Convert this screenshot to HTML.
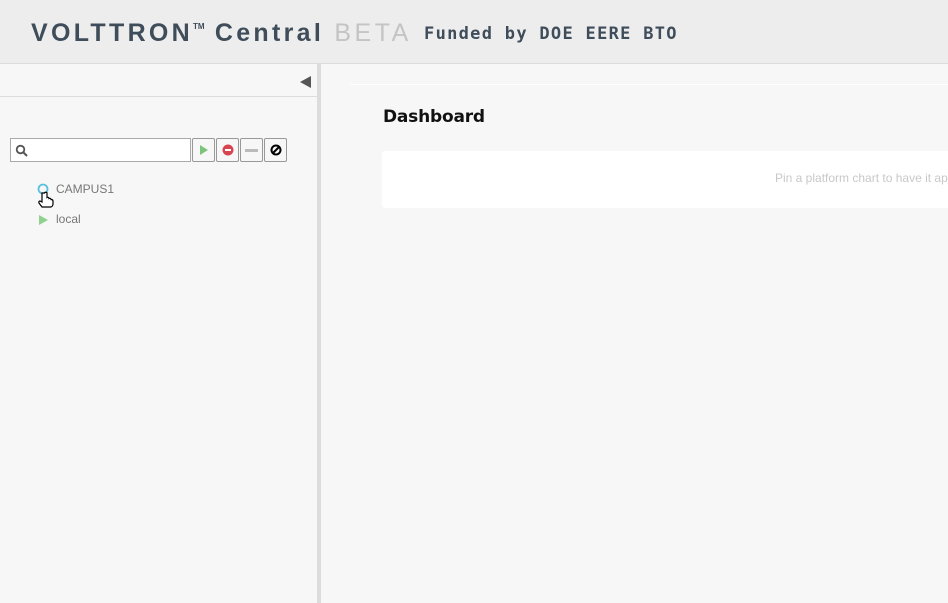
<!DOCTYPE html>
<html><head><style>
*{margin:0;padding:0;box-sizing:border-box}
body{width:948px;height:603px;overflow:hidden;background:#f7f7f7;font-family:"Liberation Sans",sans-serif;position:relative}
.hdr{position:absolute;left:0;top:0;width:948px;height:64px;background:#ededed;border-bottom:1px solid #dcdcdc}
.logo{position:absolute;left:31px;top:19px;font-size:25px;font-weight:bold;color:#3f4d5a;letter-spacing:3.3px;white-space:nowrap}
.logo sup{font-size:8px;vertical-align:12px;letter-spacing:0}
.beta{color:#c4c4c4;font-weight:normal;letter-spacing:3.5px}
.fund{font-family:"DejaVu Sans Mono","Liberation Mono",monospace;font-size:17px;letter-spacing:1.3px;color:#3f4d5a;font-weight:bold;margin-left:2px;position:relative;top:-2px}
.left{position:absolute;left:0;top:64px;width:317px;height:539px;background:#f7f7f7}
.split{position:absolute;left:317px;top:64px;width:4px;height:539px;background:#dcdcdc}
.lline{position:absolute;left:0;top:96px;width:317px;height:1px;background:#ddd}
.tri{position:absolute;left:300px;top:76px;width:0;height:0;border-top:6px solid transparent;border-bottom:6px solid transparent;border-right:11px solid #555}
.search{position:absolute;left:10px;top:138px;width:181px;height:24px;border:1px solid #aaa;background:#fff}
.btn{position:absolute;top:138px;width:23px;height:24px;border:1px solid #999;background:#f7f7f7;border-radius:2px}
.tree{position:absolute;font-size:12px;color:#777}
.mline{position:absolute;left:350px;top:84px;width:598px;height:1px;background:#fff}
h1{position:absolute;left:383px;top:107px;font-size:17px;color:#111;font-family:"DejaVu Sans",sans-serif;font-weight:bold;letter-spacing:-0.2px}
.card{position:absolute;left:382px;top:151px;width:580px;height:57px;background:#fff;border-radius:3px;overflow:hidden}
.card span{position:absolute;left:393px;top:20px;font-size:12px;color:#c8c8c8;white-space:nowrap}
</style></head><body>
<div class="hdr"><div class="logo">VOLTTRON<sup>TM</sup> Central <span class="beta">BETA</span> <span class="fund">Funded by DOE EERE BTO</span></div></div>
<div class="left"></div>
<div class="lline"></div>
<div class="tri"></div>
<div class="split"></div>
<div class="search"><svg width="14" height="14" style="position:absolute;left:4px;top:5px"><circle cx="5.5" cy="5.5" r="3.8" fill="none" stroke="#555" stroke-width="1.8"/><line x1="8.5" y1="8.5" x2="12" y2="12" stroke="#555" stroke-width="2"/></svg></div>
<div class="btn" style="left:192px"><svg width="21" height="22"><polygon points="7,6 15,11 7,16" fill="#7cc47c"/></svg></div>
<div class="btn" style="left:216px"><svg width="21" height="22"><circle cx="11" cy="11" r="5.5" fill="#d64550"/><rect x="8" y="10" width="6" height="2" fill="#fff"/></svg></div>
<div class="btn" style="left:240px"><svg width="21" height="22"><rect x="4" y="10" width="13" height="3" fill="#bbb"/></svg></div>
<div class="btn" style="left:264px"><svg width="21" height="22"><circle cx="11" cy="11" r="4.5" fill="none" stroke="#000" stroke-width="2"/><line x1="8" y1="14" x2="14" y2="8" stroke="#000" stroke-width="2"/></svg></div>
<svg style="position:absolute;left:37px;top:183px" width="12" height="12"><circle cx="6" cy="6" r="4.5" fill="none" stroke="#5bc0de" stroke-width="1.8"/></svg>
<div class="tree" style="left:56px;top:182px">CAMPUS1</div>
<svg style="position:absolute;left:37px;top:191px" width="20" height="20"><path d="M5 2v9l-2-1c-1 0-1.5 1 -1 2l3 4h9c1 0 2-2 2-3v-3c0-1-1-1.5-2-1.5c0-1-1-1.5-2-1c0-1-1-1.5-2-1v-4.5c0-1-2.5-1-2.5 0z" fill="#fff" stroke="#000" stroke-width="1.2"/></svg>
<svg style="position:absolute;left:38px;top:214px" width="12" height="12"><polygon points="1,1 10,6 1,11" fill="#8fd18f"/></svg>
<div class="tree" style="left:56px;top:212px">local</div>
<div class="mline"></div>
<h1>Dashboard</h1>
<div class="card"><span>Pin a platform chart to have it appear on the dashboard</span></div>
</body></html>
